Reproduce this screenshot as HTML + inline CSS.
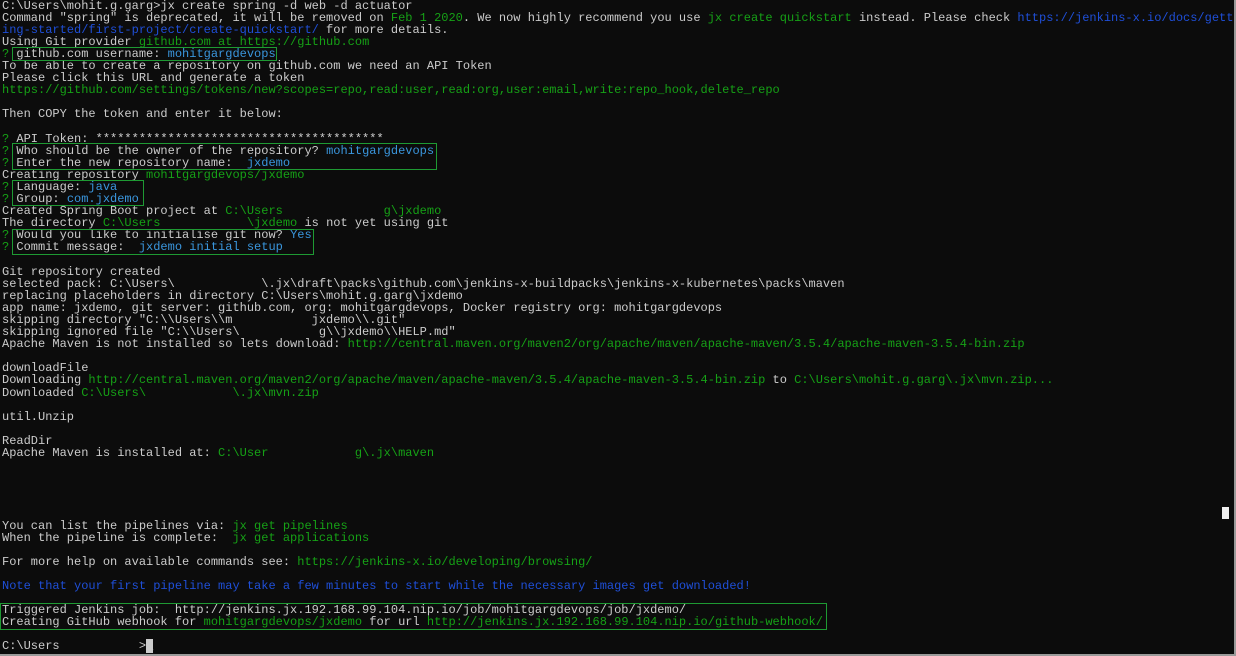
<!DOCTYPE html>
<html><head><meta charset="utf-8"><style>
html,body{margin:0;padding:0;background:#fff;}
#t{position:relative;width:1234px;height:654px;background:#0c0c0c;overflow:hidden;border-right:2px solid #9a9a9a;border-bottom:2px solid #9a9a9a;}
pre{position:absolute;left:2px;top:-0.5px;margin:0;font-family:"Liberation Mono",monospace;font-size:12px;line-height:12.1px;color:#cccccc;white-space:pre;}
.g{color:#16a116}.b{color:#1f4fd8}.c{color:#3a96dd}
.box{position:absolute;border:1px solid #1e9a33;}
</style></head><body><div id="t">
<pre>C:\Users\mohit.g.garg&gt;jx create spring -d web -d actuator
Command "spring" is deprecated, it will be removed on <span class="g">Feb 1 2020</span>. We now highly recommend you use <span class="g">jx create quickstart</span> instead. Please check <span class="b">https://jenkins-x.io/docs/gett</span>
<span class="b">ing-started/first-project/create-quickstart/</span> for more details.
Using Git provider <span class="g">github.com at https://github.com</span>
<span class="g">?</span> github.com username: <span class="c">mohitgargdevops</span>
To be able to create a repository on github.com we need an API Token
Please click this URL and generate a token
<span class="g">https://github.com/settings/tokens/new?scopes=repo,read:user,read:org,user:email,write:repo_hook,delete_repo</span>

Then COPY the token and enter it below:

<span class="g">?</span> API Token: ****************************************
<span class="g">?</span> Who should be the owner of the repository? <span class="c">mohitgargdevops</span>
<span class="g">?</span> Enter the new repository name:  <span class="c">jxdemo</span>
Creating repository <span class="g">mohitgargdevops/jxdemo</span>
<span class="g">?</span> Language: <span class="c">java</span>
<span class="g">?</span> Group: <span class="c">com.jxdemo</span>
Created Spring Boot project at <span class="g">C:\Users              g\jxdemo</span>
The directory <span class="g">C:\Users            \jxdemo</span> is not yet using git
<span class="g">?</span> Would you like to initialise git now? <span class="c">Yes</span>
<span class="g">?</span> Commit message:  <span class="c">jxdemo initial setup</span>

Git repository created
selected pack: C:\Users\            \.jx\draft\packs\github.com\jenkins-x-buildpacks\jenkins-x-kubernetes\packs\maven
replacing placeholders in directory C:\Users\mohit.g.garg\jxdemo
app name: jxdemo, git server: github.com, org: mohitgargdevops, Docker registry org: mohitgargdevops
skipping directory "C:\\Users\\m           jxdemo\\.git"
skipping ignored file "C:\\Users\           g\\jxdemo\\HELP.md"
Apache Maven is not installed so lets download: <span class="g">http://central.maven.org/maven2/org/apache/maven/apache-maven/3.5.4/apache-maven-3.5.4-bin.zip</span>

downloadFile
Downloading <span class="g">http://central.maven.org/maven2/org/apache/maven/apache-maven/3.5.4/apache-maven-3.5.4-bin.zip</span> to <span class="g">C:\Users\mohit.g.garg\.jx\mvn.zip...</span>
Downloaded <span class="g">C:\Users\            \.jx\mvn.zip</span>

util.Unzip

ReadDir
Apache Maven is installed at: <span class="g">C:\User            g\.jx\maven</span>





You can list the pipelines via: <span class="g">jx get pipelines</span>
When the pipeline is complete:  <span class="g">jx get applications</span>

For more help on available commands see: <span class="g">https://jenkins-x.io/developing/browsing/</span>

<span class="b">Note that your first pipeline may take a few minutes to start while the necessary images get downloaded!</span>

Triggered Jenkins job:  http://jenkins.jx.192.168.99.104.nip.io/job/mohitgargdevops/job/jxdemo/
Creating GitHub webhook for <span class="g">mohitgargdevops/jxdemo</span> for url <span class="g">http://jenkins.jx.192.168.99.104.nip.io/github-webhook/</span>

C:\Users           &gt;<span style="background:#ccc">_</span></pre>
<div class="box" style="left:12px;top:47px;width:263px;height:12px"></div>
<div class="box" style="left:12px;top:143px;width:423px;height:25px"></div>
<div class="box" style="left:12px;top:180px;width:130px;height:24px"></div>
<div class="box" style="left:12px;top:229px;width:300px;height:24px"></div>
<div class="box" style="left:0px;top:603px;width:825px;height:25px"></div>
<div style="position:absolute;left:1222px;top:507px;width:7px;height:12px;background:#f0f0f0;"></div>
</div></body></html>
